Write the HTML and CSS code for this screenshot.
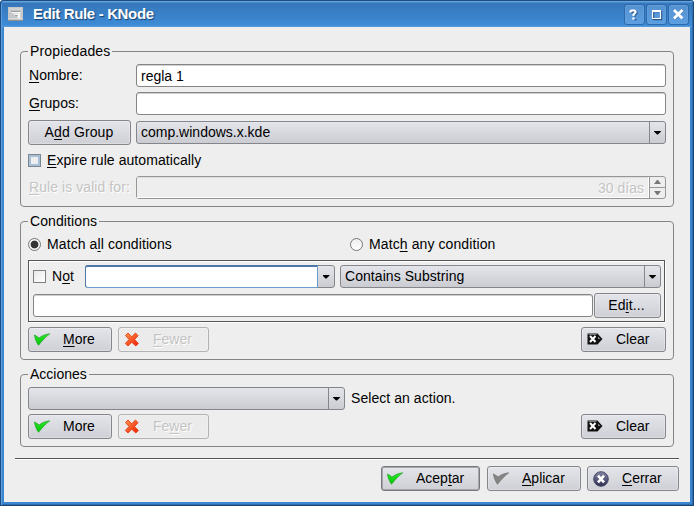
FILE: index.html
```html
<!DOCTYPE html>
<html lang="es">
<head>
<meta charset="utf-8">
<title>Edit Rule - KNode</title>
<link rel="stylesheet" href="styles.css">
</head>
<body>
<svg class="defs" width="0" height="0">
  <defs>
    <linearGradient id="green" x1="0" y1="0" x2="0" y2="1"><stop offset="0" stop-color="#2fe52f"/><stop offset="1" stop-color="#00c800"/></linearGradient>
    <linearGradient id="red" x1="0" y1="0" x2="1" y2="1"><stop offset="0" stop-color="#ff9a50"/><stop offset="1" stop-color="#f01800"/></linearGradient>
    <linearGradient id="navy" x1="0" y1="0" x2="0" y2="1"><stop offset="0" stop-color="#8688a8"/><stop offset="1" stop-color="#2c2d50"/></linearGradient>
    <symbol id="check" viewBox="0 0 16 16"><path d="M.4 3C2.200 3.800 3.700 4.800 5 6 8.500 3.300 12 2.200 15.800 1.800 11.800 4.800 8.600 8.200 4.500 13.300 2.400 10.200 1 7.200.4 3z" stroke-width=".6"/></symbol>
    <symbol id="cross" viewBox="0 0 16 16"><path d="M4 1 7.700 4.800 11.500 1 14 3.700 10.600 7.500 14.300 11.500 11.800 14 7.800 10.300 4 13.900 1.300 11.500 5 7.500 1.500 3.500z" fill="url(#red)" stroke="#e8481c" stroke-width="1"/></symbol>
    <symbol id="clear" viewBox="0 0 16 12"><path d="M.5.500H10.500L15.500 6 10.500 11.500H.5z" fill="#111"/><path d="M1.500 1.500H9.500" stroke="#777"/><path d="M11 3.500 13.500 6H11z" fill="#888"/><path d="M3 3 8.500 9M8.500 3 3 9" stroke="#fff" stroke-width="2"/></symbol>
    <symbol id="close" viewBox="0 0 16 16"><circle cx="8" cy="8" r="7.300" fill="url(#navy)" stroke="#3c3d60" stroke-width=".9"/><path d="M5 4.700 11 11.300M11 4.700 5 11.300" stroke="#fff" stroke-width="2.600"/></symbol>
  </defs>
</svg>
<div class="window">
  <header class="titlebar">
    <svg class="app-icon" viewBox="0 0 15 14"><rect width="15" height="14" fill="#c4c6c8"/><path d="M1 2H14M1 4.500H3M13 4.500H14M1 11.500H14" stroke="#dcdcdc"/><path d="M3.500 5.500H11.500V10.500H10.500V7.500H6" fill="none" stroke="#f8f8f8" stroke-width="1.500"/><path d="M3 4.500H12M7 8.500H9.500" stroke="#8c8c8c" stroke-width=".8"/><path d="M0 13.500H15" stroke="#8f8f8f"/></svg>
    <h1>Edit Rule - KNode</h1>
    <div class="win-buttons">
      <button class="win-btn" aria-label="Help"><svg viewBox="0 0 21 21"><path d="M7 8.500V7.500H8.500V6.500H11.500L12 8.500 10 10V11.800M9 14.500H11.500" transform="translate(1 1)" class="shade"/><path d="M6.500 8.500V7L7.500 6.500H10.500L11.500 7.500V8.500L9.500 10.500V12M8.300 14.500H10.700"/></svg></button>
      <button class="win-btn" aria-label="Maximize"><svg viewBox="0 0 21 21"><rect x="7.500" y="7.500" width="8" height="8" class="shade"/><path d="M6.500 7V14.500H14.500V7" class="thin"/><path d="M6 7H15" /></svg></button>
      <button class="win-btn" aria-label="Close"><svg viewBox="0 0 21 21"><path d="M7 7 15 15M15 7 7 15" class="shade"/><path class="bold" d="M6 6 14.500 14.500M14.500 6 6 14.500"/></svg></button>
    </div>
  </header>
  <main>
    <section class="group properties">
      <h2>Propiedades</h2>
      <div class="field"><label><u>N</u>ombre:</label><div class="input">regla 1</div></div>
      <div class="field"><label><u>G</u>rupos:</label><div class="input"></div></div>
      <div class="field tall"><button class="btn add">A<u>d</u>d Group</button><div class="combo"><span>comp.windows.x.kde</span><i></i></div></div>
      <div class="option"><b class="check hover"></b><span><u>E</u>xpire rule automatically</span></div>
      <div class="field disabled"><label><u>R</u>ule is valid for:</label><div class="input spin"><span>30 días</span><div class="steps"><i class="up"></i><i></i></div></div></div>
    </section>
    <section class="group conditions">
      <h2>Conditions</h2>
      <div class="radios">
        <div class="option"><b class="radio on"></b><span>Match a<u>l</u>l conditions</span></div>
        <div class="option"><b class="radio"></b><span>Matc<u>h</u> any condition</span></div>
      </div>
      <div class="frame">
        <div class="frame-row">
          <div class="option not"><b class="check"></b><span>N<u>o</u>t</span></div>
          <div class="combo editable"><span></span><i></i></div>
          <div class="combo"><span>Contains Substring</span><i></i></div>
        </div>
        <div class="frame-row edit-row"><div class="input"></div><button class="btn edit">Ed<u>i</u>t...</button></div>
      </div>
      <div class="actions">
        <button class="btn more"><svg class="ic check-green"><use href="#check"/></svg><span><u>M</u>ore</span></button>
        <button class="btn fewer off"><svg class="ic"><use href="#cross"/></svg><span><u>F</u>ewer</span></button>
        <button class="btn clear"><svg class="ic ic-clear"><use href="#clear"/></svg><span>Clear</span></button>
      </div>
    </section>
    <section class="group rule-actions">
      <h2>Acciones</h2>
      <div class="action-row"><div class="combo"><span></span><i></i></div><span>Select an action.</span></div>
      <div class="actions">
        <button class="btn more"><svg class="ic check-green"><use href="#check"/></svg><span>More</span></button>
        <button class="btn fewer off"><svg class="ic"><use href="#cross"/></svg><span>Fe<u>w</u>er</span></button>
        <button class="btn clear"><svg class="ic ic-clear"><use href="#clear"/></svg><span>Clear</span></button>
      </div>
    </section>
    <footer>
      <button class="btn accept"><svg class="ic check-green"><use href="#check"/></svg><span>Acep<u>t</u>ar</span></button>
      <button class="btn apply"><svg class="ic check-gray"><use href="#check"/></svg><span><u>A</u>plicar</span></button>
      <button class="btn close"><svg class="ic"><use href="#close"/></svg><span><u>C</u>errar</span></button>
    </footer>
  </main>
</div>
</body>
</html>
```
FILE: styles.css
```css
* { box-sizing: border-box; }
body { margin: 0; overflow: hidden; background: #fff; font: 14px/17px "Liberation Sans", Arial, sans-serif; color: #000; }
.defs { position: absolute; }
h1, h2 { margin: 0; }
u { text-decoration: underline; text-decoration-thickness: 1px; text-underline-offset: 2px; text-decoration-skip-ink: none; }
.window { width: 694px; height: 506px; padding: 0 4px 4px; background: #3b86cf; border-radius: 4px 4px 0 0; box-shadow: inset 1px 1px #1c4c80, inset -1px -1px #1b4678, inset 2px 2px #5aa0e0, inset -2px -2px #2c6db0; }
.titlebar { height: 27px; margin: 0 -2px; padding: 4px 3px 0 6px; display: flex; background: linear-gradient(#1f4d80 0 1px, #62a2df 1px 2px, #3676b9 3px, #3d8bd6 25px, #5a9ddf); border-radius: 3px 3px 0 0; }
.app-icon { width: 15px; height: 14px; margin-top: 3px; }
h1 { flex: 1; margin-left: 10px; font: bold 15px/20px "Liberation Sans", Arial, sans-serif; letter-spacing: -.35px; color: #fff; text-shadow: 1px 1px 1px #173f6e; }
.win-buttons { display: flex; gap: 1px; }
.win-btn { width: 21px; height: 21px; padding: 0; border: 1px solid #2d69ab; border-radius: 3px; background: linear-gradient(#5791ce, #5b9fe2); box-shadow: inset 0 0 0 1px #5f9fdd; }
.win-btn svg { display: block; width: 21px; height: 21px; margin: -1px; fill: none; stroke: #fff; stroke-width: 2; }
.win-btn .bold { stroke-width: 2.8; }
.win-btn .thin { stroke-width: 1.2; }
.win-btn .shade { stroke: #285a91; stroke-width: 1.5; }
main { height: 475px; width: 686px; padding: 24px 16px 0; background: #eee; display: flex; flex-direction: column; }
.group { position: relative; border: 1px solid #858585; border-radius: 4px; padding: 12px 7px 0; display: flex; flex-direction: column; }
.group h2 { position: absolute; left: 7px; top: -9px; padding: 0 2px; font-weight: normal; font-size: 14px; line-height: 17px; background: #eee; }
.properties h2 { letter-spacing: .17px; }
.conditions h2 { letter-spacing: .1px; }
.properties { height: 156px; }
.conditions { height: 139px; margin-top: 14px; padding-top: 16px; }
.rule-actions { height: 73px; margin-top: 14px; }
.field { display: flex; height: 23px; margin-bottom: 5px; align-items: center; }
.field label { width: 108px; padding-left: 1px; }
.field.tall { height: 25px; margin-bottom: 8px; gap: 5px; }
.input { flex: 1; height: 23px; border: 1px solid #858585; border-radius: 3px; background: #fff; box-shadow: inset 0 1px #d0d0d0; padding: 3px 4px 0; }
.btn { display: flex; align-items: center; justify-content: center; height: 25px; padding: 0; border: 1px solid #85868b; border-radius: 3px; background: linear-gradient(#e4e5ea, #cfd0d6); box-shadow: inset 0 0 0 1px rgba(255,255,255,.25); font: inherit; color: #000; }
.btn.add { width: 103px; padding-right: 1px; letter-spacing: .12px; }
.combo { flex: 1; display: flex; height: 23px; border: 1px solid #85868b; border-radius: 3px; background: linear-gradient(#e4e5eb, #cbccd2); }
.combo span { flex: 1; padding: 2px 4px; }
.combo i { width: 16px; border-left: 1px solid #85868b; display: flex; align-items: center; justify-content: center; }
.combo i::after { content: ""; width: 7px; height: 4px; background: #000; clip-path: polygon(0 0, 100% 0, 100% 25%, 57% 100%, 43% 100%, 0 25%); }
.option { display: flex; align-items: center; height: 17px; gap: 6px; letter-spacing: .07px; }
.properties .option { margin: -1px 0 7px; }
.check { width: 13px; height: 13px; border: 1px solid #7f7f7f; background: linear-gradient(135deg, #e8e8e8, #fff); }
.check.hover { border-color: #7c8490; background: #eee; box-shadow: inset 0 0 0 2px #a9c0d6; }
.radio { width: 13px; height: 13px; border: 1px solid #777; border-radius: 50%; background: linear-gradient(#eee, #fff); }
.radio.on { background: radial-gradient(#333 0 3.500px, #f5f5f5 4.300px); }
.disabled { color: #c4c4c4; text-shadow: 1px 1px #fff; }
.disabled label { letter-spacing: .07px; white-space: nowrap; }
.spin { display: flex; padding: 0; background: #eee; border-color: #969696; box-shadow: none; }
.spin span { flex: 1; text-align: right; padding: 3px 5px 0; box-shadow: inset -1px -1px #fff, inset 0 1px #ddd; }
.steps { width: 16px; border-left: 1px solid #969696; display: flex; flex-direction: column; }
.steps i { flex: 1; display: flex; align-items: center; justify-content: center; }
.steps i.up { border-bottom: 1px solid #969696; }
.steps i::after { content: ""; width: 7px; height: 4px; background: #777; clip-path: polygon(0 0, 100% 0, 57% 100%, 43% 100%); }
.steps i.up::after { transform: scaleY(-1); }
.radios { display: flex; height: 22px; }
.radios .option { flex: none; width: 322px; height: 13px; letter-spacing: .1px; }
.frame { height: 62px; border: 1px solid #555; box-shadow: 1px 1px #fff, inset 1px 1px #fff; padding: 4px 3px 4px 4px; margin-right: 1px; }
.frame-row { display: flex; align-items: center; height: 23px; }
.frame-row .combo { letter-spacing: .06px; }
.not { width: 52px; letter-spacing: 0; }
.combo.editable { flex: none; width: 250px; margin-right: 5px; }
.editable span { background: #fff; margin: -1px 0 -1px -1px; border: 1px solid #6c9ccd; border-top: 2px solid #4e78a6; border-left-color: #4e78a6; border-radius: 3px 0 0 3px; }
.editable i { border-left: 0; }
.edit-row { height: 25px; margin-top: 5px; gap: 1px; }
.btn.edit { width: 67px; padding-right: 2px; letter-spacing: .1px; }
.actions { display: flex; margin-top: 5px; }
.rule-actions .actions { margin-top: 4px; }
.actions .btn, footer .btn { justify-content: flex-start; padding-left: 5px; }
.ic { width: 16px; height: 16px; flex: none; }
.btn .ic + span { flex: 1; text-align: left; margin-left: 13px; }
.check-green { fill: url(#green); stroke: #109a18; }
.check-gray { fill: #858585; stroke: #666; }
.actions .ic-clear { height: 12px; margin-top: -1px; }
.more { width: 84px; margin-right: 6px; }
.fewer { width: 91px; }
.actions .clear { width: 85px; margin-left: auto; }
.btn.off { background: #ebebeb; border-color: #b2b2b2; color: #c4c4c4; text-shadow: 1px 1px #fff; }
.action-row { display: flex; align-items: center; height: 23px; gap: 6px; letter-spacing: .06px; }
.action-row .combo { flex: none; width: 317px; }
footer { margin: 11px -5px 0; height: 34px; border-top: 1px solid #555; box-shadow: inset 0 1px #fff; display: flex; justify-content: flex-end; padding-top: 7px; }
footer .accept { width: 99px; margin-right: 7px; border-color: #77787d; box-shadow: inset 0 0 0 1px #a7a8ad; }
footer .apply { width: 94px; margin-right: 6px; }
footer .close { width: 92px; }
```
